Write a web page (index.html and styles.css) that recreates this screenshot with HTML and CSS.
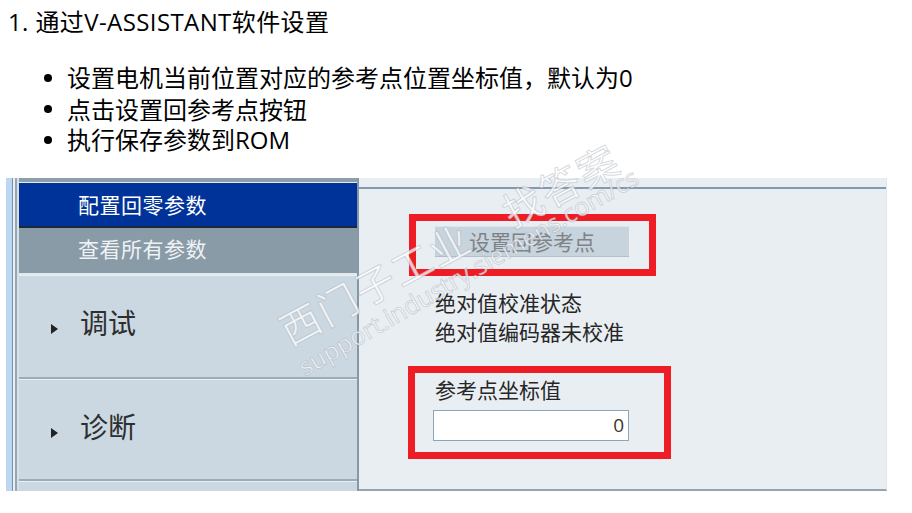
FILE: index.html
```html
<!DOCTYPE html>
<html lang="zh-CN">
<head>
<meta charset="utf-8">
<title>V-ASSISTANT 回参考点设置</title>
<link rel="stylesheet" href="styles.css">
</head>
<body>
<div class="page">
  <div class="heading">1. 通过V-ASSISTANT软件设置</div>
  <ul class="steps">
    <li>设置电机当前位置对应的参考点位置坐标值，默认为0</li>
    <li>点击设置回参考点按钮</li>
    <li>执行保存参数到ROM</li>
  </ul>

  <div class="shot">
    <div class="frame"></div>
    <div class="sidebar">
      <div class="side-top"></div>
      <div class="item active">配置回零参数</div>
      <div class="item muted">查看所有参数</div>
      <div class="group"><span class="tri"></span><span>调试</span></div>
      <div class="group second"><span class="tri"></span><span>诊断</span></div>
      <div class="group rest"></div>
    </div>
    <div class="sep"></div>
    <div class="content">
      <div class="content-top"></div>
      <div class="content-body">
        <div class="btn">设置回参考点</div>
        <div class="status">
          <div>绝对值校准状态</div>
          <div>绝对值编码器未校准</div>
        </div>
        <div class="label">参考点坐标值</div>
        <div class="input">0</div>
      </div>
      <div class="mark mark-btn"></div>
      <div class="mark mark-input"></div>
    </div>
  </div>

  <div class="wm wm-cn">西门子工业　找答案</div>
  <div class="wm wm-url">support.industry.siemens.com/cs</div>
</div>
</body>
</html>
```

FILE: styles.css
```css
html, body {
  margin: 0;
  padding: 0;
  background: #ffffff;
}
.page {
  position: relative;
  width: 912px;
  height: 513px;
  overflow: hidden;
  font-family: "Open Sans", "Noto Sans CJK SC", sans-serif;
  color: #000;
}
.heading {
  padding: 6px 0 0 8px;
  font-size: 24px;
  line-height: 31px;
  height: 31px;
  letter-spacing: 0.4px;
}
.steps {
  list-style: none;
  margin: 25px 0 0 0;
  padding: 0;
  font-size: 24px;
  line-height: 31px;
}
.steps li {
  display: flex;
  align-items: center;
  height: 31px;
}
.steps li::before {
  content: "";
  width: 8px;
  height: 8px;
  border-radius: 50%;
  background: #000;
  margin-left: 44px;
  margin-right: 15px;
  flex: none;
}
.steps li:nth-child(2) { height: 32px; }
.steps li:nth-child(3) { height: 29px; }

.shot {
  display: flex;
  margin: 24px 0 0 6px;
  width: 881px;
  height: 313px;
  font-family: "Noto Sans CJK SC", "Open Sans", sans-serif;
}
.frame {
  width: 13px;
  flex: none;
  background: linear-gradient(to right,
    #bcd7f3 0, #bcd7f3 6px,
    #7f8e9b 6px, #7f8e9b 7px,
    #e8eff5 7px, #e8eff5 9px,
    #97a6b3 9px, #97a6b3 11px,
    #d6e0e8 11px, #d6e0e8 13px);
}
.sidebar {
  width: 338px;
  flex: none;
  display: flex;
  flex-direction: column;
  background: #cbd8e1;
}
.side-top {
  height: 4px;
  background: #8d9daa;
  border-bottom: 1px solid #e3eaf0;
}
.item {
  display: flex;
  align-items: center;
  padding-left: 59px;
  font-size: 21px;
  letter-spacing: 0.5px;
  line-height: 1;
}
.item.active {
  height: 42px;
  padding-bottom: 1px;
  background: #003399;
  color: #ffffff;
  border-bottom: 2px solid #1c2738;
}
.item.muted {
  height: 41px;
  padding-bottom: 4px;
  background: #8a9ba8;
  color: #eef2f5;
  border-bottom: 2px solid #e2e9ee;
}
.group {
  display: flex;
  align-items: center;
  box-sizing: border-box;
  height: 104px;
  padding: 0 0 10px 32px;
  font-size: 28px;
  color: #2e2e2e;
  border-top: 1px solid #e9f0f4;
  border-bottom: 2px solid #9aacba;
}
.group .tri {
  width: 0;
  height: 0;
  border-top: 5.5px solid transparent;
  border-bottom: 5.5px solid transparent;
  border-left: 7px solid #222;
  margin: 14px 22px 0 0;
}
.group.second {
  height: 102px;
  padding-bottom: 8px;
}
.group.rest {
  flex: 1;
  border-bottom: 0;
  height: auto;
  padding: 0;
}
.sep {
  width: 2px;
  flex: none;
  background: #8797a5;
}
.content {
  position: relative;
  flex: 1;
  display: flex;
  flex-direction: column;
  background: #e9eef3;
  border-bottom: 2px solid #93a4b2;
  border-right: 1px solid #dfe6ec;
}
.content-top {
  height: 9px;
  border-bottom: 2px solid #8499ab;
}
.content-body {
  padding: 37px 0 0 76px;
  font-size: 21px;
  color: #262626;
}
.btn {
  width: 194px;
  height: 31px;
  box-sizing: border-box;
  background: #c7d3dd;
  border-top: 1px solid #dde6ec;
  border-bottom: 1px solid #b2c0cb;
  color: #7e8286;
  font-size: 21px;
  line-height: 28px;
  text-align: center;
}
.status {
  margin-top: 31px;
  line-height: 29px;
}
.label {
  margin-top: 29px;
  line-height: 29px;
}
.input {
  margin: 6px 0 0 -2px;
  width: 196px;
  height: 31px;
  box-sizing: border-box;
  background: #ffffff;
  border: 1px solid #8ea4b8;
  padding-right: 4px;
  text-align: right;
  font-family: "Open Sans", sans-serif;
  font-size: 19px;
  line-height: 29px;
  color: #3a3530;
}
.mark {
  position: absolute;
  border: 7px solid #ee1c25;
  box-sizing: border-box;
}
.mark-btn {
  left: 50px;
  top: 36px;
  width: 247px;
  height: 62px;
}
.mark-input {
  left: 49px;
  top: 188px;
  width: 263px;
  height: 93px;
}

.wm {
  position: absolute;
  white-space: nowrap;
  color: rgba(255, 255, 255, 0.75);
  -webkit-text-stroke: 1px rgba(150, 160, 172, 0.4);
  transform-origin: 0 50%;
  pointer-events: none;
}
.wm-cn {
  left: 282px;
  top: 312px;
  font-family: "Noto Sans CJK SC", sans-serif;
  font-size: 40px;
  line-height: 40px;
  letter-spacing: 2px;
  transform: rotate(-28deg);
}
.wm-url {
  left: 300px;
  top: 356px;
  font-family: "Open Sans", sans-serif;
  font-size: 25px;
  line-height: 24px;
  transform: rotate(-30deg);
}
```
